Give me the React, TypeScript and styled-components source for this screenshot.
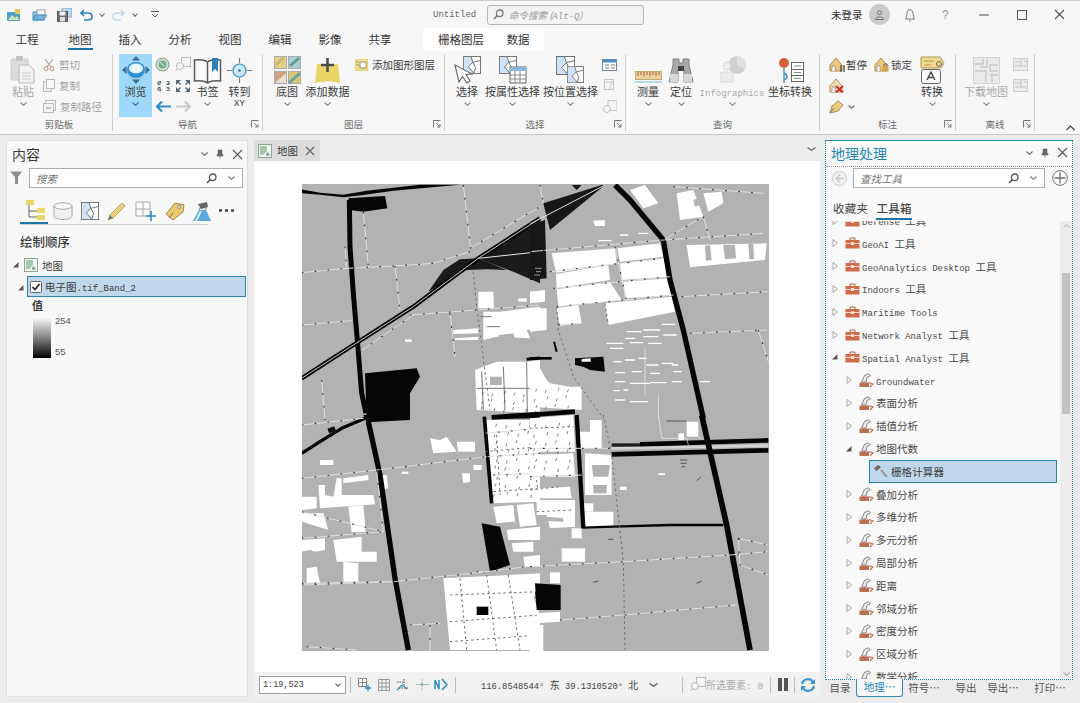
import React from "react";
import styled, { createGlobalStyle } from "styled-components";

const Global = createGlobalStyle`
  html, body { margin: 0; padding: 0; width: 1080px; height: 703px; overflow: hidden; background: #eeeeee; }
  body { font-family: "Noto Sans CJK SC", "Liberation Sans", sans-serif; color: #3c3c3c; }
  * { box-sizing: border-box; }
`;

const Lat = styled.span<{ $s?: number }>`
  font-family: "Liberation Mono", monospace;
  font-size: ${(p) => p.$s ?? 9}px;
`;
const Glyph = styled.svg`
  display: block;
  flex: none;
`;
type SvgP = { w: number; h: number; children?: React.ReactNode };
const S = ({ w, h, children }: SvgP) => (
  <Glyph width={w} height={h} viewBox={`0 0 ${w} ${h}`}>
    {children}
  </Glyph>
);

/* ---------- layout ---------- */
const Page = styled.div`
  width: 1080px;
  height: 703px;
  display: flex;
  flex-direction: column;
  overflow: hidden;
  background: #ececec;
`;
const TitleBar = styled.div`
  height: 28px;
  display: flex;
  align-items: center;
  background: #f7f7f7;
  border-top: 1px solid #cfcfcf;
`;
const Qat = styled.div`
  width: 433px;
  height: 100%;
  display: flex;
  align-items: center;
  padding-left: 7px;
`;
const QatSlot = styled.div<{ $w: number }>`
  width: ${(p) => p.$w}px;
  flex: none;
  display: flex;
  align-items: center;
`;
const DocTitle = styled.div`
  width: 54px;
  color: #666;
  font-size: 9px;
  line-height: 12px;
  display: flex;
  align-items: center;
`;
const TopSearch = styled.div`
  width: 157px;
  height: 20px;
  background: #f3f3f3;
  border: 1px solid #b4b4b4;
  border-radius: 3px;
  display: flex;
  align-items: center;
  gap: 5px;
  padding-left: 5px;
  font-size: 9.5px;
  font-style: italic;
  color: #9a9a9a;
`;
const Account = styled.div`
  margin-left: 187px;
  width: 34px;
  font-size: 10.5px;
  color: #333;
`;
const Avatar = styled.div`
  width: 21px;
  height: 21px;
  margin-left: 4px;
  border-radius: 50%;
  background: #c9c9c9;
  display: flex;
  align-items: center;
  justify-content: center;
`;
const WinSlot = styled.div<{ $ml: number }>`
  margin-left: ${(p) => p.$ml}px;
  flex: none;
  display: flex;
`;
const TabBar = styled.div`
  height: 24px;
  display: flex;
  padding-left: 2px;
  background: #f7f7f7;
`;
const TabItem = styled.div<{ $on?: boolean; $w?: number; $ml?: number }>`
  width: ${(p) => p.$w ?? 50}px;
  margin-left: ${(p) => p.$ml ?? 0}px;
  height: 24px;
  display: flex;
  justify-content: center;
  padding-top: 2px;
  font-size: 11.5px;
  line-height: 18px;
  color: #333;
  span {
    display: block;
    height: 20px;
    padding: 0 1px;
    border-bottom: ${(p) => (p.$on ? "2px solid #1d74a6" : "2px solid transparent")};
  }
`;
const Context = styled.div`
  margin-left: 18px;
  width: 121px;
  height: 23px;
  background: #ffffff;
  border-radius: 2px;
  display: flex;
  padding-left: 6px;
`;
const Ribbon = styled.div`
  height: 83px;
  display: flex;
  padding: 2px 0 0 6px;
  background: #f7f7f7;
  border-bottom: 1px solid #c7c7c7;
`;
const Group = styled.div<{ $w: number }>`
  width: ${(p) => p.$w}px;
  flex: none;
  display: flex;
  flex-direction: column;
  border-right: 1px solid #cfcfcf;
  margin-bottom: 3px;
`;
const GroupBody = styled.div`
  height: 63px;
  display: flex;
`;
const GroupFoot = styled.div`
  flex: 1;
  display: grid;
  grid-template-columns: 1fr auto 1fr;
  align-items: center;
  font-size: 9.5px;
  color: #6a6a6a;
  span:last-child {
    justify-self: end;
    margin-right: 3px;
    display: block;
  }
`;
const Large = styled.div<{ $w: number; $ml?: number; $on?: boolean; $off?: boolean }>`
  width: ${(p) => p.$w}px;
  margin-left: ${(p) => p.$ml ?? 0}px;
  flex: none;
  display: flex;
  flex-direction: column;
  align-items: center;
  background: ${(p) => (p.$on ? "#9fd8f8" : "transparent")};
  color: ${(p) => (p.$off ? "#a8a8a8" : "#3c3c3c")};
  font-size: 11px;
  line-height: 14px;
`;
const LargeIcon = styled.div`
  height: 30px;
  width: 100%;
  display: flex;
  align-items: flex-end;
  justify-content: center;
`;
const LargeText = styled.div`
  height: 14px;
  white-space: nowrap;
`;
const LargeSub = styled.div`
  height: 12px;
  display: flex;
  justify-content: center;
  align-items: center;
  line-height: 10px;
`;
const SmallCol = styled.div<{ $ml: number; $w?: number }>`
  margin-left: ${(p) => p.$ml}px;
  ${(p) => (p.$w ? `width:${p.$w}px;flex:none;` : "")}
  display: flex;
  flex-direction: column;
`;
const Small = styled.div<{ $off?: boolean; $gap?: number }>`
  height: 21px;
  display: flex;
  align-items: center;
  gap: ${(p) => p.$gap ?? 4}px;
  white-space: nowrap;
  font-size: 10.5px;
  color: ${(p) => (p.$off ? "#a0a0a0" : "#3c3c3c")};
`;
const SmallRow = styled.div<{ $gap?: number; $start?: boolean }>`
  height: 21px;
  display: flex;
  align-items: center;
  justify-content: ${(p) => (p.$start ? "flex-start" : "center")};
  gap: ${(p) => p.$gap ?? 3}px;
`;
const Collapse = styled.div`
  flex: 1;
  display: flex;
  align-items: flex-end;
  justify-content: flex-end;
  padding: 0 5px 3px 0;
`;
const Main = styled.div`
  flex: 1;
  min-height: 0;
  display: flex;
  gap: 5px;
  padding: 5px 7px 6px 6px;
`;
const LeftPanel = styled.div`
  width: 242px;
  flex: none;
  background: #f8f8f8;
  border: 1px solid #dedede;
  display: flex;
  flex-direction: column;
`;
const PanelHead = styled.div<{ $blue?: boolean }>`
  height: 26px;
  flex: none;
  display: flex;
  align-items: center;
  padding: 0 4px 0 5px;
  font-size: 14px;
  color: ${(p) => (p.$blue ? "#1f86b5" : "#3a3a3a")};
  ${(p) => (p.$blue ? "border-bottom:1px dotted #9a9a9a;padding-bottom:2px;" : "")}
`;
const HeadTitle = styled.div`
  flex: 1;
`;
const HeadBtns = styled.div`
  display: flex;
  align-items: center;
  gap: 8px;
`;
const SearchRow = styled.div`
  height: 22px;
  flex: none;
  display: flex;
  align-items: center;
`;
const SearchBox = styled.div<{ $w: number; $ml: number }>`
  width: ${(p) => p.$w}px;
  margin-left: ${(p) => p.$ml}px;
  height: 20px;
  background: #fff;
  border: 1px solid #adadad;
  display: flex;
  align-items: center;
  justify-content: space-between;
  padding: 0 7px 0 6px;
  font-style: italic;
  font-size: 10.5px;
  color: #777;
`;
const SearchEnd = styled.div`
  display: flex;
  align-items: center;
  gap: 11px;
`;
const CatRow = styled.div`
  height: 27px;
  margin-top: 8px;
  padding: 0 0 0 18px;
  display: flex;
  align-items: center;
  gap: 8px;
`;
const CatLine = styled.div`
  margin: 0 0 0 13px;
  width: 188px;
  height: 1px;
  background: #d6d6d6;
  position: relative;
  &::before {
    content: "";
    position: absolute;
    left: 0;
    top: -2px;
    width: 28px;
    height: 2px;
    background: #1d74a6;
  }
`;
const Heading = styled.div`
  margin: 8px 0 0 13px;
  height: 18px;
  line-height: 18px;
  font-size: 12.5px;
  font-weight: 500;
  color: #3c3c3c;
`;
const MapRow = styled.div`
  margin-top: 3px;
  height: 22px;
  display: flex;
  align-items: center;
  padding-left: 5px;
  gap: 4px;
  font-size: 10.5px;
`;
const LayerRow = styled.div`
  margin-left: 20px;
  width: 219px;
  height: 21px;
  background: #c0d8ec;
  border: 1px solid #2c82ad;
  display: flex;
  align-items: center;
  padding-left: 2px;
  gap: 3px;
  font-size: 10.5px;
  position: relative;
`;
const LayerArrow = styled.div`
  position: absolute;
  left: -11px;
  top: 6px;
`;
const LegendTitle = styled.div`
  margin: 0 0 0 25px;
  font-size: 11px;
  font-weight: 700;
  line-height: 16px;
`;
const Legend = styled.div`
  margin: 5px 0 0 26px;
  display: flex;
  gap: 4px;
`;
const Ramp = styled.div`
  width: 18px;
  height: 40px;
  background: linear-gradient(#f6f6f6, #8c8c8c 45%, #000);
`;
const RampLabels = styled.div`
  height: 43px;
  margin-top: -3px;
  display: flex;
  flex-direction: column;
  justify-content: space-between;
  font-family: "Liberation Sans", sans-serif;
  font-size: 9.5px;
  color: #555;
  line-height: 12px;
`;
const Center = styled.div`
  width: 567px;
  flex: none;
  display: flex;
  flex-direction: column;
`;
const DocTabs = styled.div`
  height: 21px;
  display: flex;
  align-items: flex-start;
  justify-content: space-between;
  padding-right: 4px;
`;
const DocTab = styled.div`
  margin-left: 1px;
  width: 66px;
  height: 21px;
  background: #dcdcdc;
  display: flex;
  align-items: center;
  padding: 0 4px;
  font-size: 10.5px;
  gap: 5px;
`;
const DocTabLabel = styled.span`
  white-space: nowrap;
  margin-right: 2px;
`;
const DocChevron = styled.div`
  padding-top: 7px;
`;
const MapView = styled.div`
  flex: 1;
  background: #fff;
  margin-left: 1px;
  padding: 23px 0 0 48px;
  min-height: 0;
`;
const StatusBar = styled.div`
  height: 25px;
  margin-left: 1px;
  background: #f1f1f1;
  display: flex;
  align-items: center;
  padding-left: 5px;
  font-size: 10px;
  color: #555;
`;
const ScaleBox = styled.div`
  width: 87px;
  height: 18px;
  background: #fff;
  border: 1px solid #9e9e9e;
  display: flex;
  align-items: center;
  justify-content: space-between;
  padding: 0 4px 0 3px;
  color: #444;
`;
const Sep = styled.div<{ $ml: number }>`
  margin-left: ${(p) => p.$ml}px;
  width: 1px;
  height: 16px;
  background: #bdbdbd;
  flex: none;
`;
const StatItem = styled.div<{ $ml: number }>`
  margin-left: ${(p) => p.$ml}px;
  flex: none;
  display: flex;
  align-items: center;
`;
const CoordText = styled.div`
  margin-left: 25px;
  width: 168px;
  flex: none;
  white-space: pre;
  color: #444;
`;
const SelCount = styled.div`
  flex: none;
  white-space: pre;
  color: #aaa;
`;
const Right = styled.div`
  flex: 1;
  display: flex;
  flex-direction: column;
`;
const Geo = styled.div`
  height: 540px;
  background: #f9f9f9;
  border: 1px dotted #1f7fa8;
  border-top: 1px solid #2f8cb0;
  display: flex;
  flex-direction: column;
  overflow: hidden;
`;
const GeoTabs = styled.div`
  height: 32px;
  flex: none;
  display: flex;
  align-items: flex-start;
  padding: 11px 0 0 7px;
  gap: 8px;
  font-size: 11.5px;
`;
const GeoTab = styled.div<{ $on?: boolean }>`
  height: 20px;
  line-height: 16px;
  color: #444;
  letter-spacing: 0.3px;
  border-bottom: ${(p) => (p.$on ? "2px solid #1d74a6" : "none")};
  font-weight: ${(p) => (p.$on ? 500 : 400)};
`;
const TreeArea = styled.div`
  flex: 1;
  min-height: 0;
  display: flex;
`;
const Tree = styled.div`
  flex: 1;
  overflow: hidden;
  min-width: 0;
`;
const TreeList = styled.div`
  margin-top: -11.8px;
  display: flex;
  flex-direction: column;
`;
const Row = styled.div<{ $level: number }>`
  height: 22.8px;
  flex: none;
  display: flex;
  align-items: center;
  padding-left: ${(p) => 5 + p.$level * 14}px;
  font-size: 10.5px;
  color: #4a4a4a;
  white-space: nowrap;
`;
const RowArrow = styled.div`
  width: 8px;
  margin-right: 6px;
  flex: none;
`;
const RowLabel = styled.div`
  margin-left: 2px;
`;
const SelectedRow = styled.div`
  height: 22.8px;
  flex: none;
  margin: 0 3px 0 43px;
  background: #c0d8ec;
  border: 1px solid #2c82ad;
  display: flex;
  align-items: center;
  padding-left: 3px;
  gap: 2px;
  font-size: 10.5px;
  letter-spacing: 0.1px;
`;
const Scroll = styled.div`
  width: 12px;
  flex: none;
  background: #ececec;
  display: flex;
  flex-direction: column;
  align-items: center;
  padding-top: 3px;
`;
const Thumb = styled.div`
  width: 8px;
  height: 141px;
  margin-top: 45px;
  background: #c2c2c2;
`;
const ScrollEnd = styled.div`
  margin-top: auto;
  padding-bottom: 3px;
`;
const BottomTabs = styled.div`
  flex: 1;
  display: flex;
  align-items: flex-start;
  font-size: 10.5px;
  color: #555;
`;
const BottomTab = styled.div<{ $w: number; $ml: number; $on?: boolean }>`
  width: ${(p) => p.$w}px;
  margin-left: ${(p) => p.$ml}px;
  height: 17px;
  line-height: 15px;
  text-align: center;
  white-space: nowrap;
  ${(p) =>
    p.$on
      ? "color:#1f86b5;background:#f9f9f9;border:1px solid #2f8cb0;border-top:none;border-radius:0 0 3px 3px;margin-top:-1px;height:18px;"
      : ""}
`;
const Spacer = styled.div<{ $w: number }>`
  width: ${(p) => p.$w}px;
  flex: none;
`;

/* ---------- small icons ---------- */
const ChevD = ({ c = "#777", w = 7 }: { c?: string; w?: number }) => (
  <S w={w} h={4}>
    <path d={`M.5 .5L${w / 2} 3.3L${w - 0.5} .5`} fill="none" stroke={c} strokeWidth="1.1" />
  </S>
);
const Pin = () => (
  <S w={8} h={10}>
    <path d="M2 1h4v4.5h1V7H1V5.5h1zM4 7v3" fill="#666" stroke="#666" strokeWidth=".6" />
  </S>
);
const Close = ({ s = 11, c = "#555" }: { s?: number; c?: string }) => (
  <S w={s} h={s}>
    <path d={`M1 1L${s - 1} ${s - 1}M${s - 1} 1L1 ${s - 1}`} stroke={c} strokeWidth="1.1" />
  </S>
);
const Mag = ({ c = "#555" }: { c?: string }) => (
  <S w={11} h={11}>
    <circle cx="6.7" cy="4.3" r="3.3" fill="none" stroke={c} strokeWidth="1.3" />
    <path d="M4.2 6.8L1 10" stroke={c} strokeWidth="1.6" />
  </S>
);
const TriR = () => (
  <S w={8} h={10}>
    <path d="M2 1.5L6.5 5L2 8.5z" fill="#fafafa" stroke="#a8a8a8" />
  </S>
);
const TriD = () => (
  <S w={8} h={10}>
    <path d="M1 7.5H6.5V2z" fill="#555" />
  </S>
);
const Launcher = () => (
  <S w={8} h={8}>
    <path d="M.5 7.5V.5H7.5M3 3L7 7M7 4V7H4" fill="none" stroke="#777" />
  </S>
);
const Toolbox = () => (
  <S w={15} h={12}>
    <path d="M5 3V1h5v2" fill="none" stroke="#b5613c" />
    <rect x=".5" y="3" width="14" height="8.5" fill="#d2694a" />
    <rect x="0" y="6" width="15" height="1" fill="#f2d8c8" />
    <rect x="6" y="5" width="3" height="3" fill="#f3e0c8" />
  </S>
);
const ToolSet = () => (
  <S w={15} h={14}>
    <path d="M2.5 9L5.5 2.5L9.5 .8L11.5 2.8L8 4.5L7 9z" fill="#ececec" stroke="#777" strokeWidth=".9" />
    <path d="M.5 9.5H10V14H.5z" fill="#bd6d50" />
    <path d="M10 9.5L14 11L11 14" fill="none" stroke="#b96a4e" strokeWidth="1.1" />
  </S>
);
const Hammer = () => (
  <S w={16} h={14}>
    <path d="M8 6L14 13" stroke="#a59a8c" strokeWidth="2" />
    <path d="M1 4L5 1L8 3L5.5 5.5L3 7z" fill="#6e6e6e" />
  </S>
);

const Row1 = ({ level, open, set, children }: { level: number; open?: boolean; set?: boolean; children: React.ReactNode }) => (
  <Row $level={level}>
    <RowArrow>{open ? <TriD /> : <TriR />}</RowArrow>
    {set ? <ToolSet /> : <Toolbox />}
    <RowLabel>{children}</RowLabel>
  </Row>
);

/* ---------- ribbon icons ---------- */
const Tile = ({ x = 0, y = 0, s = 20 }: { x?: number; y?: number; s?: number }) => (
  <g transform={`translate(${x} ${y}) scale(${s / 20})`}>
    <rect x=".5" y=".5" width="19" height="19" fill="#fff" stroke="#6a6a6a" />
    <path d="M1 1H9L11 7L6 12L12 19H1z" fill="#cde3f5" />
    <path d="M9 1L11 7L6 12L12 19M11 7L19 5M11 7L14 13L12 19" fill="none" stroke="#6a6a6a" />
  </g>
);
const NewProj = () => (
  <S w={14} h={12}>
    <rect x="0" y="3" width="13" height="9" rx="1" fill="#4f9fcd" />
    <path d="M1 11L5 6L8 9L10 7L12 11z" fill="#cfe6a8" />
    <rect x="8" y="0" width="5" height="5" fill="#e5c85e" />
  </S>
);
const OpenProj = () => (
  <S w={15} h={12}>
    <path d="M1 3H6L7 4.5H12V11H1z" fill="#9fc9e6" stroke="#4a90bd" />
    <rect x="5" y="1" width="8" height="5" fill="#fff" stroke="#999" />
    <path d="M1 11L3 6H14.5L12 11z" fill="#73b1d9" stroke="#4a90bd" />
  </S>
);
const SaveProj = () => (
  <S w={15} h={14}>
    <rect x="5" y="0" width="10" height="9" fill="#bcd8ec" stroke="#86a8c0" />
    <rect x=".5" y="3.5" width="10" height="10" fill="#6d6d7a" stroke="#555" />
    <rect x="2.5" y="3.5" width="6" height="4" fill="#eee" />
    <rect x="3" y="9" width="5" height="4.5" fill="#ddd" />
  </S>
);
const Undo = () => (
  <S w={13} h={12}>
    <path d="M4 1L1 4L4 7M1 4H8C11 4 12 6 12 7.5C12 9 11 11 8 11H4" fill="none" stroke="#2a86c0" strokeWidth="1.7" />
  </S>
);
const Redo = () => (
  <S w={13} h={12}>
    <path d="M9 1L12 4L9 7M12 4H5C2 4 1 6 1 7.5C1 9 2 11 5 11H9" fill="none" stroke="#c4dcea" strokeWidth="1.7" />
  </S>
);
const Customize = () => (
  <S w={8} h={7}>
    <path d="M0 .5H8M1 3L4 6L7 3" fill="none" stroke="#555" />
  </S>
);
const Paste = () => (
  <S w={26} h={28}>
    <rect x="1" y="3" width="17" height="21" rx="1" fill="#dcdcdc" stroke="#cfcfcf" />
    <rect x="6" y="0" width="7" height="5" fill="#c4c4c4" />
    <path d="M9 9H19L24 14V27H9z" fill="#f2f2f2" stroke="#bbb" />
    <path d="M12 17H21M12 20H21M12 23H21" stroke="#ccc" />
  </S>
);
const Scissors = () => (
  <S w={12} h={13}>
    <path d="M2 1L8 9M10 1L4 9" stroke="#aaa" strokeWidth="1.2" />
    <circle cx="3" cy="10.5" r="2" fill="none" stroke="#c48a7c" />
    <circle cx="9" cy="10.5" r="2" fill="none" stroke="#c48a7c" />
  </S>
);
const Copy = () => (
  <S w={12} h={13}>
    <rect x=".5" y="2.5" width="8" height="10" fill="#eee" stroke="#bbb" />
    <rect x="3.5" y=".5" width="8" height="9" fill="#f8f8f8" stroke="#bbb" />
  </S>
);
const CopyPath = () => (
  <S w={13} h={13}>
    <rect x="2.5" y=".5" width="10" height="10" fill="#f8f8f8" stroke="#bbb" />
    <rect x=".5" y="3.5" width="10" height="9" fill="#f2f2f2" stroke="#bbb" />
    <path d="M3 8H8" stroke="#999" />
  </S>
);
const Navigator = () => (
  <S w={28} h={28}>
    <path d="M14 0L10 4.5H18zM14 28L10 23.5H18zM0 14L4.5 10V18zM28 14L23.5 10V18z" fill="#3a6f9c" />
    <ellipse cx="14" cy="14" rx="9" ry="8" fill="#2f8fd0" />
    <ellipse cx="14" cy="12.5" rx="7" ry="5" fill="#e8f3fb" />
  </S>
);
const Globe = () => (
  <S w={15} h={15}>
    <circle cx="7.5" cy="7.5" r="6.5" fill="#cfe0d4" stroke="#8a9a90" />
    <circle cx="7.5" cy="7.5" r="4" fill="#79b08f" />
    <path d="M5 5L9 9" stroke="#eee" />
  </S>
);
const ZoomLayer = () => (
  <S w={16} h={15}>
    <rect x="6.5" y=".5" width="9" height="9" fill="#f6f6f6" stroke="#bbb" />
    <circle cx="5" cy="9" r="3.5" fill="#f8f8f8" stroke="#b5b5b5" />
    <path d="M2 12L.5 14" stroke="#b5b5b5" />
  </S>
);
const Arrows4 = ({ flip }: { flip?: boolean }) => (
  <S w={14} h={12}>
    {flip ? (
      <path d="M0 0h5L3 2l2 2-1 1-2-2-2 2zM14 0h-5l2 2-2 2 1 1 2-2 2 2zM0 12h5l-2-2 2-2-1-1-2 2-2-2zM14 12h-5l2-2-2-2 1-1 2 2 2-2z" fill="#5b6b78" />
    ) : (
      <path d="M0 1l4 4H1zM1 1h3v3zM13 1L9 5h3zM9 1h4v3zM0 11l4-4H1zM1 11h3V8zM13 11L9 7h3zM9 11h4V8z" fill="#5b6b78" />
    )}
  </S>
);
const ArrowL = () => (
  <S w={15} h={11}>
    <path d="M6 .5L1 5.5L6 10.5M1 5.5H15" fill="none" stroke="#2f8fd0" strokeWidth="2.2" />
  </S>
);
const ArrowR = () => (
  <S w={15} h={11}>
    <path d="M9 .5L14 5.5L9 10.5M14 5.5H0" fill="none" stroke="#c9c9c9" strokeWidth="2.2" />
  </S>
);
const Book = () => (
  <S w={29} h={26}>
    <path d="M14.5 4C11 1.5 6 1.5 1.5 2V23C6 22.5 11 22.5 14.5 25C18 22.5 23 22.5 27.5 23V2C23 1.5 18 1.5 14.5 4zM14.5 4V25" fill="#fafafa" stroke="#5a5a5a" strokeWidth="1.5" />
    <path d="M19 0H25V14L22 11L19 14z" fill="#2f80b8" />
  </S>
);
const GoTo = () => (
  <S w={27} h={27}>
    <circle cx="13.5" cy="13.5" r="6.5" fill="#cfe6f6" stroke="#2f8cc5" strokeWidth="1.2" />
    <circle cx="13.5" cy="13.5" r="1.3" fill="#2f6c9a" />
    <path d="M13.5 1V6M13.5 21V26M1 13.5H6M21 13.5H26" stroke="#777" strokeWidth="1.1" />
  </S>
);
const Basemap = () => (
  <S w={27} h={28}>
    <rect x=".5" y=".5" width="12" height="12" fill="#e3cf85" stroke="#aaa" />
    <path d="M2 9L9 2" stroke="#c9b874" strokeWidth="3" />
    <rect x="14.5" y=".5" width="12" height="12" fill="#a8cfd6" stroke="#aaa" />
    <path d="M16 10L25 2" stroke="#63a08f" strokeWidth="3" />
    <rect x=".5" y="15.5" width="12" height="12" fill="#cda27c" stroke="#aaa" />
    <path d="M1 27L12 17V27z" fill="#e4e0d2" />
    <rect x="14.5" y="15.5" width="12" height="12" fill="#d8c678" stroke="#aaa" />
    <path d="M15 27L26 17" stroke="#69a3a4" strokeWidth="3" />
  </S>
);
const AddData = () => (
  <S w={27} h={26}>
    <path d="M3 6H24L26 25L14 23L1 25z" fill="#ecd464" />
    <path d="M13.5 0V14M7 7H20" stroke="#4d4d4d" strokeWidth="2.6" />
  </S>
);
const AddGraphic = () => (
  <S w={13} h={12}>
    <rect x="0" y="0" width="13" height="12" fill="#f0e199" stroke="#d8c264" />
    <rect x="5" y="3" width="6" height="6" fill="#fff" stroke="#9a8f5a" />
    <path d="M1 3H4M1 6H4" stroke="#9a8f5a" />
  </S>
);
const Cursor = () => (
  <path d="M1 9L5 26L8.5 20.5L13 27L16 25L12 18.5L18 18z" fill="#fff" stroke="#666" strokeWidth="1.1" />
);
const SelectIc = () => (
  <S w={27} h={28}>
    <Tile x={9} y={0} s={18} />
    <Cursor />
  </S>
);
const SelAttr = () => (
  <S w={28} h={28}>
    <Tile x={0} y={0} s={18} />
    <rect x="11" y="11" width="16" height="16" fill="#fff" stroke="#666" />
    <rect x="11" y="11" width="16" height="4" fill="#8ab8de" />
    <path d="M11 19H27M11 23H27M16 15V27M21 15V27" stroke="#888" />
  </S>
);
const SelLoc = () => (
  <S w={29} h={28}>
    <Tile x={0} y={0} s={19} />
    <Tile x={11} y={10} s={17} />
  </S>
);
const TableIc = () => (
  <S w={15} h={12}>
    <rect x=".5" y=".5" width="14" height="11" fill="#fff" stroke="#6a8aa8" />
    <rect x=".5" y=".5" width="14" height="3" fill="#4f8fc0" />
    <path d="M3 6H7M3 9H7M9 6H13M9 9H13" stroke="#7a7a7a" />
  </S>
);
const SelFade = ({ z }: { z?: boolean }) => (
  <S w={15} h={14}>
    <rect x={z ? 6 : 2.5} y=".5" width="9" height="10" fill="#f6f6f6" stroke="#c6c6c6" />
    {z ? <circle cx="5" cy="9" r="3.5" fill="#f9f9f9" stroke="#c0c0c0" /> : <path d="M4 3H11L8 7V10" fill="none" stroke="#c6c6c6" />}
  </S>
);
const Ruler = () => (
  <S w={27} h={16}>
    <rect x=".5" y="3.5" width="26" height="8" fill="#e9d19d" stroke="#c3a872" />
    <path d="M3 4V8M6 4V7M9 4V8M12 4V7M15 4V8M18 4V7M21 4V8M24 4V7" stroke="#b4603c" />
    <path d="M0 14H27" stroke="#7ab6dc" />
  </S>
);
const Binoc = () => (
  <S w={26} h={26}>
    <path d="M5 1H11V5H15V1H21V7L25 24H16V12H10V24H1L5 7z" fill="#a9a9a9" stroke="#808080" />
    <rect x="2" y="16" width="8" height="8" fill="#d7d7d7" />
    <rect x="16" y="16" width="8" height="8" fill="#d7d7d7" />
    <rect x="10" y="8" width="6" height="5" fill="#444" />
  </S>
);
const Info = () => (
  <S w={28} h={28}>
    <circle cx="19" cy="9" r="9" fill="#d0d0d0" />
    <path d="M19 9V0A9 9 0 0 1 27 13z" fill="#e2e2e2" />
    <circle cx="9" cy="10" r="4" fill="#eee" stroke="#d6d6d6" />
    <path d="M3 26V16H15V26z" fill="#ececec" stroke="#d6d6d6" />
  </S>
);
const CoordIc = () => (
  <S w={29} h={28}>
    <circle cx="8" cy="7" r="5" fill="#d2603c" />
    <path d="M8 12V27" stroke="#5a9cc5" strokeWidth="1.5" />
    <path d="M11 22A5 5 0 0 0 8 17M11 22L8 24" fill="none" stroke="#3a8cc0" strokeWidth="1.5" />
    <rect x="15.5" y="6.5" width="12" height="7" fill="#fff" stroke="#666" />
    <rect x="15.5" y="13.5" width="12" height="6" fill="#fff" stroke="#666" />
    <rect x="15.5" y="19.5" width="12" height="6" fill="#fff" stroke="#666" />
    <path d="M18 10H25M18 16.5H25M18 22.5H25" stroke="#888" />
  </S>
);
const House = ({ c = "#e9c77e" }: { c?: string }) => (
  <g>
    <path d="M1 8L7 1L13 8V14H1z" fill={c} stroke="#b8894e" />
    <path d="M3 14V9H6V14" fill="#fff" stroke="#888" strokeWidth=".7" />
  </g>
);
const Pause = () => (
  <S w={16} h={15}>
    <House />
    <path d="M12 8V15M15 8V15" stroke="#555" strokeWidth="1.4" />
  </S>
);
const Lock = () => (
  <S w={16} h={15}>
    <House />
    <rect x="8.5" y="9" width="6" height="5.5" fill="#d4a34d" />
    <path d="M10 9V7H13V9" fill="none" stroke="#666" />
  </S>
);
const Cancel = () => (
  <S w={15} h={15}>
    <House c="#f0dcae" />
    <path d="M7 8L14 14.5M14 8L7 14.5" stroke="#d02c22" strokeWidth="1.8" />
  </S>
);
const PenIc = () => (
  <S w={15} h={14}>
    <path d="M1 13L3 6L9 1L14 5L9 11z" fill="#eccf7e" stroke="#a89050" />
    <path d="M1 13L5 8" stroke="#777" />
  </S>
);
const Convert = () => (
  <S w={25} h={28}>
    <path d="M1 1H20L24 7L21 12H1z" fill="#f0d98e" stroke="#b39a52" />
    <path d="M4 5H14M4 9H11" stroke="#b39a52" />
    <circle cx="19" cy="8" r="2.5" fill="none" stroke="#666" />
    <rect x="1.5" y="13.5" width="19" height="14" rx="2" fill="#fafafa" stroke="#666" />
    <path d="M7 24L11 16L15 24M8.5 21.5H13.5" fill="none" stroke="#444" strokeWidth="1.4" />
  </S>
);
const Download = () => (
  <S w={27} h={27}>
    <rect x=".5" y=".5" width="26" height="26" fill="#eaeaea" stroke="#d4d4d4" />
    <path d="M2 7H10V2M14 2V10H7M2 14H13V25M25 8H17V14H25M17 18H25M19 25V18" fill="none" stroke="#c8c8c8" strokeWidth="1.4" />
  </S>
);
const TileFade = () => (
  <S w={15} h={13}>
    <rect x=".5" y=".5" width="14" height="12" fill="#ececec" stroke="#cfcfcf" />
    <path d="M2 4H8M8 1V8M2 8H13M11 3H14" stroke="#c4c4c4" />
  </S>
);
/* contents tab icons */
const DrawOrder = () => (
  <S w={20} h={21}>
    <rect x="1" y="0" width="8" height="5" fill="#ecd56a" />
    <path d="M4 5V17H12M4 11H12" fill="none" stroke="#666" />
    <rect x="12" y="8" width="8" height="5" fill="#ecd56a" />
    <rect x="12" y="15" width="8" height="5" fill="#ecd56a" />
  </S>
);
const Cylinder = () => (
  <S w={20} h={18}>
    <path d="M1 4V14C1 16 5 17.5 10 17.5S19 16 19 14V4" fill="#f0f0f0" stroke="#aaa" />
    <ellipse cx="10" cy="4" rx="9" ry="3.3" fill="#f8f8f8" stroke="#aaa" />
  </S>
);
const Pencil = () => (
  <S w={20} h={20}>
    <path d="M1 19L3 14L15 2L18 5L6 17z" fill="#eccf7e" stroke="#c4a860" />
    <path d="M1 19L3 14L6 17z" fill="#777" />
  </S>
);
const GridPlus = () => (
  <S w={22} h={20}>
    <path d="M1 1H15V15H1zM8 1V15M1 8H15" fill="#fafafa" stroke="#aaa" />
    <path d="M16 10V20M11 15H21" stroke="#2f8cc5" strokeWidth="1.6" />
  </S>
);
const Label2 = () => (
  <S w={20} h={20}>
    <path d="M1 13L10 2L19 4L18 11L8 19z" fill="#ecc96e" stroke="#a88a44" />
    <circle cx="14" cy="6" r="1.5" fill="#fff" stroke="#888" />
    <path d="M4 17L8 12" stroke="#666" />
  </S>
);
const Flask = () => (
  <S w={18} h={20}>
    <path d="M0 20L6 9H13L18 20z" fill="#5aa8d8" />
    <path d="M6 9L9 3H13L13 9" fill="#e8e8e8" stroke="#888" />
    <path d="M5 3L14 1L15 6L8 8z" fill="#666" />
    <path d="M3 20L8 10" stroke="#d4ecf8" strokeWidth="2" />
  </S>
);
const MapIc = () => (
  <S w={14} h={14}>
    <rect x=".5" y=".5" width="13" height="13" fill="#f1f1f1" stroke="#8aa892" />
    <path d="M2 2H9V7L5 11H2z" fill="#a3c9ae" />
    <path d="M9 8L12 11L8 12z" fill="#6a9a7c" />
  </S>
);
const Check = () => (
  <S w={12} h={12}>
    <rect x=".5" y=".5" width="11" height="11" rx="1" fill="#fff" stroke="#666" />
    <path d="M2.5 6L5 8.5L9.5 3" fill="none" stroke="#222" strokeWidth="1.7" />
  </S>
);
const Funnel = () => (
  <S w={12} h={14}>
    <path d="M0 .5H12L8 6V13H5V6z" fill="#8d8d8d" />
  </S>
);
const BackC = () => (
  <S w={15} h={15}>
    <circle cx="7.5" cy="7.5" r="7" fill="#f2f2f2" stroke="#c9c9c9" />
    <path d="M8 3.5L4 7.5L8 11.5M4 7.5H12" fill="none" stroke="#c9c9c9" strokeWidth="1.4" />
  </S>
);
const PlusC = () => (
  <S w={16} h={16}>
    <circle cx="8" cy="8" r="7.3" fill="#fff" stroke="#6c6c6c" />
    <path d="M8 2.5V13.5M2.5 8H13.5" stroke="#6c6c6c" strokeWidth="1.3" />
  </S>
);
/* status icons */
const StGrid = () => (
  <S w={14} h={13}>
    <path d="M.5.5H8.5V8.5H.5zM4.5.5V8.5M.5 4.5H8.5" fill="#fff" stroke="#888" />
    <path d="M10 7V13M7 10H13" stroke="#2f8cc5" strokeWidth="1.4" />
  </S>
);
const StGrid2 = () => (
  <S w={12} h={12}>
    <path d="M.5.5H11.5V11.5H.5zM4 .5V11.5M8 .5V11.5M.5 4H11.5M.5 8H11.5" fill="#f4f4f4" stroke="#999" />
  </S>
);
const StNet = () => (
  <S w={14} h={13}>
    <path d="M1 4L8 4M8 1V8M3 10H13" stroke="#555" strokeDasharray="1.5 1" />
    <path d="M1 12L6 7L11 11" fill="none" stroke="#2f8cc5" strokeWidth="1.3" />
  </S>
);
const StSnap = () => (
  <S w={13} h={11}>
    <path d="M6 0V11" stroke="#bbb" strokeDasharray="2 1" />
    <path d="M0 5.5H13" stroke="#9cc4a8" />
    <circle cx="6" cy="5.5" r="1.5" fill="#aaa" />
  </S>
);
const StNorth = () => (
  <S w={14} h={13}>
    <path d="M1 11V2L5 11V2" fill="none" stroke="#2f8cc5" strokeWidth="1.5" />
    <path d="M8 1L13 6.5L8 12" fill="none" stroke="#2f8cc5" strokeWidth="1.5" />
  </S>
);
const StPause = () => (
  <S w={10} h={13}>
    <path d="M0 0H4V13H0zM6 0H10V13H6z" fill="#555" />
  </S>
);
const StRefresh = () => (
  <S w={14} h={14}>
    <path d="M1 6A6 6 0 0 1 12 4M13 8A6 6 0 0 1 2 10" fill="none" stroke="#3d93cf" strokeWidth="2.2" />
    <path d="M14 1V6H9zM0 13V8H5z" fill="#3d93cf" />
  </S>
);
const WinMin = () => (
  <S w={10} h={10}>
    <path d="M0 5H10" stroke="#555" />
  </S>
);
const WinMax = () => (
  <S w={10} h={10}>
    <rect x=".5" y=".5" width="9" height="9" fill="none" stroke="#555" />
  </S>
);
const Bell = () => (
  <S w={12} h={14}>
    <path d="M1.5 11C3 9.5 2.5 4 4 2.5C5 1.5 7 1.5 8 2.5C9.5 4 9 9.5 10.5 11zM5 13H7" fill="none" stroke="#777" />
  </S>
);
const User = () => (
  <S w={9} h={10}>
    <circle cx="4.5" cy="2.7" r="2" fill="none" stroke="#777" />
    <path d="M.5 9.5C1 6 8 6 8.5 9.5z" fill="none" stroke="#777" />
  </S>
);
const Question = styled.div`
  font-family: "Liberation Sans", sans-serif;
  font-size: 12px;
  color: #999;
  line-height: 14px;
`;

/* ---------- map ---------- */
const MapCanvas = styled.svg`
  display: block;
  background: #b2b2b2;
`;
const Z = ({ x, y, children }: { x: number; y: number; children: React.ReactNode }) => (
  <g transform={`translate(${x} ${y}) scale(${1 / 3})`}>{children}</g>
);
const Polys = ({ p, f }: { p: string[]; f: string }) => (
  <>
    {p.map((d, i) => (
      <polygon key={i} points={d} fill={f} />
    ))}
  </>
);
const Dashes = ({ p }: { p: string[] }) => (
  <g fill="none">
    {p.map((d, i) => (
      <g key={i}>
        <polyline points={d} stroke="#dedede" strokeWidth="3" />
        <polyline points={d} stroke="#333" strokeWidth="3.5" strokeDasharray="5 34" />
      </g>
    ))}
  </g>
);
const GrayDash = ({ p }: { p: string[] }) => (
  <g fill="none">
    {p.map((d, i) => (
      <polyline key={i} points={d} stroke="#6c6c6c" strokeWidth="3" strokeDasharray="7 9" />
    ))}
  </g>
);
const Road = ({ d, w, c = "#050505" }: { d: string; w: number; c?: string }) => (
  <polyline points={d} fill="none" stroke={c} strokeWidth={w} strokeLinejoin="round" />
);
const Bits = ({ d, c = "#fff", w = 4 }: { d: string; c?: string; w?: number }) => <path d={d} stroke={c} strokeWidth={w} fill="none" />;
const ticks = (x0: number, y0: number, x1: number, y1: number, dx: number, dy: number) => {
  let d = "";
  let i = 0;
  for (let y = y0; y < y1; y += dy) {
    for (let x = x0; x < x1; x += dx) {
      i += 1;
      d += `M${x + ((i * 7) % 11)},${y + ((i * 5) % 13)}l3,-9`;
    }
  }
  return d;
};

const Raster = () => (
  <MapCanvas width={467} height={467} viewBox="302 184 467 467">
    <Z x={300} y={180}>
      <Polys f="#fff" p={["535,335 580,335 582,385 535,385", "550,395 600,395 680,385 720,380 720,445 680,450 690,475 590,470 550,480", "460,450 535,445 535,460 460,462", "465,475 535,470 535,480 465,480", "315,478 335,478 335,486 315,486", "525,570 590,545 680,545 720,540 720,700 530,690", "690,335 720,335 720,365 690,365", "655,355 680,355 680,365 655,365"]} />
      <Polys f="#b2b2b2" p={["570,590 605,590 605,615 570,615", "595,465 640,460 650,500 600,510", "660,475 690,478 690,520 660,515"]} />
      <Bits c="#777" w={3} d="M540,410H575M560,440H600M530,625H720M545,575L550,690M610,560L615,690M680,545L682,700" />
      <Bits c="#444" w={2} d={ticks(540, 640, 715, 690, 32, 24)} />
      <Road d="148,60 150,200 160,340 172,480 185,640 198,700" w={15} />
      <Polys f="#060606" p={["5,28 60,38 130,44 200,32 360,14 480,14 280,32 190,45 130,52 60,44 5,40", "145,55 255,48 262,85 190,95 150,90", "195,580 350,565 360,590 330,640 330,720 200,720"]} />
      <Polys f="#1a1a1a" p={["535,235 720,115 720,310 640,275 560,245", "385,335 430,270 480,238 535,235 620,270 560,268 500,270 440,305"]} />
      <Road d="5,595 160,495 340,380 420,320 535,235 720,115" w={13} />
      <Road d="5,595 160,495 340,380 420,320 535,235 720,115" w={3} c="#cfcfcf" />
      <Road d="535,235 720,215" w={3} c="#e8e8e8" />
      <Road d="680,538 720,534" w={9} />
      <Road d="575,712 720,702" w={14} />
      <Bits d="M700,262h20M705,272h15M708,282h12" w={2} c="#ddd" />
      <Dashes p={["5,278 140,265 280,258 400,250 510,215", "490,15 512,210", "190,95 205,260", "285,258 300,390", "5,435 155,422", "330,405 530,390 720,375", "180,515 340,405", "450,400 465,530", "65,600 75,720", "135,200 140,265", "510,205 720,80"]} />
      <GrayDash p={["520,275 530,380 570,690"]} />
    </Z>
    <Z x={530} y={180}>
      <Polys f="#fff" p={["65,220 255,205 260,250 78,278", "262,205 390,190 400,230 270,245", "78,282 235,255 240,300 80,325", "270,250 405,235 415,290 275,300", "80,328 240,305 275,360 85,380", "280,305 420,295 425,345 285,355", "225,370 425,350 435,395 235,435", "80,385 145,375 155,430 90,437", "300,30 345,15 385,70 340,85", "440,40 490,30 520,110 450,120", "520,40 575,35 580,70 535,95", "470,195 710,190 705,240 480,262", "190,122 225,120 225,138 195,138", "0,335 45,330 45,365 0,370", "0,385 50,385 50,450 0,455", "0,550 20,548 50,600 60,610 120,620 155,620 155,690 0,680"]} />
      <Polys f="#b2b2b2" p={["525,198 540,195 545,240 528,242", "580,195 615,195 618,235 585,238", "655,192 670,192 672,238 658,238", "490,60 505,55 510,75 495,80"]} />
      <Polys f="#171717" p={["0,135 45,120 50,295 0,300", "40,70 215,15 225,15 60,150", "125,15 155,15 140,30"]} />
      <Polys f="#060606" p={["135,535 220,530 225,575 180,570 160,560 135,555"]} />
      <polygon points="155,537 182,535 182,545 155,545" fill="#fff" />
      <Road d="0,132 225,15" w={3} c="#e0e0e0" />
      <Road d="255,15 300,60 400,180 420,300 460,450 520,715" w={16} />
      <Road d="72,485 80,515" w={6} />
      <Road d="0,535 65,535" w={8} />
      <Road d="0,705 135,695" w={14} />
      <Bits c="#ddd" w={2} d="M15,265h20M18,275h15M12,285h18" />
      <Dashes p={["0,215 400,180 700,160", "255,200 290,365", "455,350 715,335", "480,460 710,450", "685,450 715,545", "400,180 520,110", "520,110 540,180", "430,20 700,40", "30,15 40,70", "60,275 400,235", "70,325 420,290", "80,380 430,345", "85,435 155,430"]} />
      <GrayDash p={["80,380 85,450 130,590 220,715", "225,370 235,435"]} />
      <Bits d="M205,182h40M270,165h25M325,160h30M290,455h45M340,450h50M395,433h40M285,475h30M340,470h45M400,465h40M230,490h50M300,488h40M355,490h40M240,505h40M250,545h25M285,540h30M325,535h25M350,555h35M395,550h35M425,555h20M255,578h30M305,575h30M360,580h30M430,575h25M255,605h30M300,610h60M360,608h50M425,605h30M250,632h20M280,630h15M255,660h30M300,665h30M330,665h25M510,605h30" />
      <Bits c="#eee" w={2} d="M345,505V645M385,640V715" />
      <Bits c="#555" w={2} d={ticks(10, 630, 130, 680, 32, 24)} />
    </Z>
    <Z x={300} y={415}>
      <Polys f="#fff" p={["555,15 720,15 720,260 575,265", "5,245 50,245 50,280 5,285", "55,210 75,210 75,240 100,245 110,190 125,190 125,240 220,240 225,268 60,280", "145,275 190,270 197,350 155,352", "5,295 70,295 85,345 5,320", "5,375 75,370 75,405 45,410 30,405 5,410", "100,375 185,365 185,410 230,410 230,440 135,440 110,440", "130,440 175,445 175,500 130,500", "20,460 50,455 60,505 20,505", "390,70 420,75 440,65 470,110 400,115", "470,80 525,80 525,110 475,110", "60,135 100,135 100,150 60,150", "130,190 205,180 205,195 130,205", "240,180 260,180 265,220 250,222", "305,170 325,170 325,177 305,177", "485,175 510,175 510,200 490,205", "520,150 545,150 545,165 520,165", "580,275 640,270 645,320 590,325", "650,270 700,265 710,330 660,335", "620,345 720,335 720,375 625,375", "635,385 700,380 700,410 640,410", "670,425 720,420 720,455 675,455", "430,490 720,475 720,535 700,545 720,600 720,705 450,705"]} />
      <Polys f="#b2b2b2" p={["470,10 530,10 525,50 470,45"]} />
      <Polys f="#060606" p={["545,325 600,335 630,450 570,470", "190,0 330,0 330,15 200,22", "530,575 565,575 565,600 530,600", "580,0 720,0 720,10 580,12", "705,530 720,525 720,585 712,585"]} />
      <Road d="5,115 60,80 125,40 195,10" w={10} />
      <Road d="85,48 105,40" w={14} />
      <Road d="205,20 240,180 285,490 325,705" w={16} />
      <Road d="553,5 575,265" w={11} />
      <Bits c="#444" w={2} d={ticks(580, 30, 715, 255, 34, 26)} />
      <Dashes p={["5,30 190,10", "5,190 230,165 560,125", "5,290 250,350", "5,370 250,350", "5,505 280,500 560,470 720,450", "5,510 280,500", "330,630 420,625", "390,630 390,710", "230,165 250,350", "560,125 720,115", "555,55 720,40", "580,180 720,175", "20,695 170,705", "530,470 560,470"]} />
      <GrayDash p={["480,490 500,705", "560,480 590,705", "625,480 660,705", "450,540 720,530", "450,620 720,600", "450,680 720,660", "590,60 600,240", "690,20 715,240", "555,110 720,95", "580,230 720,220"]} />
    </Z>
    <Z x={530} y={415}>
      <Polys f="#fff" p={["0,10 130,0 135,110 0,110", "0,120 130,115 135,185 0,185", "20,220 120,215 125,250 20,250", "20,255 135,255 135,335 60,340 50,300 20,300", "150,50 180,50 180,15 215,15 215,100 150,100", "165,115 245,120 245,240 165,240", "160,290 250,290 250,335 160,340", "160,265 190,265 190,290 160,290", "125,340 155,340 155,370 125,370", "95,400 165,400 165,440 95,440", "60,472 90,472 90,505 60,505", "0,425 30,425 30,455 0,455", "20,595 90,590 90,620 20,625", "0,630 40,630 40,710 0,710", "470,20 505,20 505,65 470,65", "445,55 462,55 462,75 445,75", "385,175 405,175 405,180 385,180", "270,215 290,215 290,225 270,225"]} />
      <Polys f="#b2b2b2" p={["185,150 240,150 235,185 190,185", "190,210 230,210 230,235 190,235", "50,305 100,310 100,320 50,318", "75,375 100,375 100,395 75,395"]} />
      <Bits c="#444" w={2} d={ticks(8, 30, 125, 180, 34, 26)} />
      <Polys f="#060606" p={["15,505 92,510 92,585 20,585"]} />
      <polygon points="245,85 330,85 330,95 245,95" fill="#1d1d1d" />
      <Road d="330,88 715,76" w={14} />
      <Road d="245,118 715,106" w={14} />
      <Road d="245,100 715,92" w={7} c="#d4d4d4" />
      <Road d="515,0 590,330 660,705" w={17} />
      <Road d="140,0 160,340" w={13} />
      <Road d="160,338 250,335 420,330 580,330" w={7} />
      <Dashes p={["0,100 240,100", "0,185 160,180", "0,455 280,440 600,420 715,410", "90,615 280,600 620,570", "625,370 715,390", "625,370 630,450 715,480"]} />
      <Bits c="#eee" w={2} d="M385,0L395,70H470L475,90M505,65L515,72" />
      <GrayDash p={["220,0 245,120 280,440 285,705", "0,225 90,215", "0,40 130,35", "20,290 130,285"]} />
      <Bits c="#555" w={3} d="M410,18H470M450,135H472M452,145H470M455,155H465M190,502L205,498M500,505L515,498M500,197L512,187M235,373H250" />
    </Z>
  </MapCanvas>
);

const LB = ({ w, ml, on, off, icon, text, chev = true, sub }: { w: number; ml?: number; on?: boolean; off?: boolean; icon: React.ReactNode; text: React.ReactNode; chev?: boolean; sub?: React.ReactNode }) => (
  <Large $w={w} $ml={ml} $on={on} $off={off}>
    <LargeIcon>{icon}</LargeIcon>
    <LargeText>{text}</LargeText>
    <LargeSub>{sub ?? (chev ? <ChevD c={on ? "#3a6f9c" : "#888"} /> : null)}</LargeSub>
  </Large>
);
const Foot = ({ t, launch = true }: { t: string; launch?: boolean }) => (
  <GroupFoot>
    <span />
    <span>{t}</span>
    <span>{launch ? <Launcher /> : null}</span>
  </GroupFoot>
);

export default function App() {
  return (
    <Page>
      <Global />
      <TitleBar>
        <Qat>
          <QatSlot $w={25}><NewProj /></QatSlot>
          <QatSlot $w={25}><OpenProj /></QatSlot>
          <QatSlot $w={23}><SaveProj /></QatSlot>
          <QatSlot $w={19}><Undo /></QatSlot>
          <QatSlot $w={13}><ChevD c="#666" w={6} /></QatSlot>
          <QatSlot $w={20}><Redo /></QatSlot>
          <QatSlot $w={19}><ChevD c="#666" w={6} /></QatSlot>
          <QatSlot $w={10}><Customize /></QatSlot>
        </Qat>
        <DocTitle><Lat>Untitled</Lat></DocTitle>
        <TopSearch>
          <Mag c="#777" />
          <span>命令搜索 (<Lat>Alt-Q</Lat>)</span>
        </TopSearch>
        <Account>未登录</Account>
        <Avatar><User /></Avatar>
        <WinSlot $ml={14}><Bell /></WinSlot>
        <WinSlot $ml={26}><Question>?</Question></WinSlot>
        <WinSlot $ml={30}><WinMin /></WinSlot>
        <WinSlot $ml={28}><WinMax /></WinSlot>
        <WinSlot $ml={27}><Close s={11} c="#555" /></WinSlot>
      </TitleBar>
      <TabBar>
        {["工程", "地图", "插入", "分析", "视图", "编辑", "影像", "共享"].map((t, i) => (
          <TabItem key={t} $on={i === 1} $ml={i === 1 ? 3 : 0}><span>{t}</span></TabItem>
        ))}
        <Context>
          <TabItem $w={64}><span>栅格图层</span></TabItem>
          <TabItem $w={50}><span>数据</span></TabItem>
        </Context>
      </TabBar>
      <Ribbon>
        <Group $w={107}>
          <GroupBody>
            <LB w={26} ml={4} off icon={<Paste />} text="粘贴" />
            <SmallCol $ml={7}>
              <Small $off><Scissors />剪切</Small>
              <Small $off><Copy />复制</Small>
              <Small $off><CopyPath />复制路径</Small>
            </SmallCol>
          </GroupBody>
          <Foot t="剪贴板" launch={false} />
        </Group>
        <Group $w={150}>
          <GroupBody>
            <LB w={33} ml={6} on icon={<Navigator />} text="浏览" />
            <SmallCol $ml={2} $w={38}>
              <SmallRow $gap={5}><Globe /><ZoomLayer /></SmallRow>
              <SmallRow $gap={5}><Arrows4 /><Arrows4 flip /></SmallRow>
              <SmallRow $gap={5}><ArrowL /><ArrowR /></SmallRow>
            </SmallCol>
            <LB w={29} ml={1} icon={<Book />} text="书签" />
            <LB w={27} ml={4} icon={<GoTo />} text="转到" sub={<Lat>XY</Lat>} />
          </GroupBody>
          <Foot t="导航" />
        </Group>
        <Group $w={182}>
          <GroupBody>
            <LB w={28} ml={10} icon={<Basemap />} text="底图" />
            <LB w={43} ml={5} icon={<AddData />} text="添加数据" />
            <SmallCol $ml={6}>
              <Small><AddGraphic />添加图形图层</Small>
            </SmallCol>
          </GroupBody>
          <Foot t="图层" />
        </Group>
        <Group $w={181}>
          <GroupBody>
            <LB w={28} ml={8} icon={<SelectIc />} text="选择" />
            <LB w={51} ml={6} icon={<SelAttr />} text="按属性选择" />
            <LB w={51} ml={7} icon={<SelLoc />} text="按位置选择" />
            <SmallCol $ml={4} $w={18}>
              <SmallRow><TableIc /></SmallRow>
              <SmallRow><SelFade /></SmallRow>
              <SmallRow><SelFade z /></SmallRow>
            </SmallCol>
          </GroupBody>
          <Foot t="选择" />
        </Group>
        <Group $w={194}>
          <GroupBody>
            <LB w={28} ml={8} icon={<Ruler />} text="测量" />
            <LB w={28} ml={5} icon={<Binoc />} text="定位" />
            <LB w={64} ml={5} off icon={<Info />} text={<Lat>Infographics</Lat>} />
            <LB w={46} ml={3} icon={<CoordIc />} text="坐标转换" chev={false} />
          </GroupBody>
          <Foot t="查询" launch={false} />
        </Group>
        <Group $w={136}>
          <GroupBody>
            <SmallCol $ml={9} $w={87}>
              <SmallRow $gap={7} $start>
                <Small $gap={1}><Pause />暂停</Small>
                <Small $gap={1}><Lock />锁定</Small>
              </SmallRow>
              <Small><Cancel /></Small>
              <Small><PenIc /><ChevD c="#666" /></Small>
            </SmallCol>
            <LB w={32} icon={<Convert />} text="转换" />
          </GroupBody>
          <Foot t="标注" />
        </Group>
        <Group $w={79}>
          <GroupBody>
            <LB w={44} ml={8} off icon={<Download />} text="下载地图" />
            <SmallCol $ml={3} $w={18}>
              <SmallRow><TileFade /></SmallRow>
              <SmallRow><TileFade /></SmallRow>
            </SmallCol>
          </GroupBody>
          <Foot t="离线" />
        </Group>
        <Collapse>
          <Glyph width={9} height={6} viewBox="0 0 9 6">
            <path d="M.5 5L4.5 1L8.5 5" fill="none" stroke="#444" strokeWidth="1.2" />
          </Glyph>
        </Collapse>
      </Ribbon>
      <Main>
        <LeftPanel>
          <PanelHead>
            <HeadTitle>内容</HeadTitle>
            <HeadBtns><ChevD c="#666" /><Pin /><Close /></HeadBtns>
          </PanelHead>
          <SearchRow>
            <Spacer $w={3} />
            <Funnel />
            <SearchBox $w={214} $ml={7}>
              <span>搜索</span>
              <SearchEnd><Mag /><ChevD c="#777" /></SearchEnd>
            </SearchBox>
          </SearchRow>
          <CatRow>
            <DrawOrder />
            <Cylinder />
            <S w={18} h={18}><Tile s={18} /></S>
            <Pencil />
            <GridPlus />
            <Label2 />
            <Flask />
            <S w={15} h={3}><path d="M0 1.5h3M6 1.5h3M12 1.5h3" stroke="#444" strokeWidth="2.4" /></S>
          </CatRow>
          <CatLine />
          <Heading>绘制顺序</Heading>
          <MapRow>
            <TriD />
            <MapIc />
            地图
          </MapRow>
          <LayerRow>
            <LayerArrow><TriD /></LayerArrow>
            <Check />
            <span>电子图<Lat>.tif_Band_2</Lat></span>
          </LayerRow>
          <LegendTitle>值</LegendTitle>
          <Legend>
            <Ramp />
            <RampLabels><span>254</span><span>55</span></RampLabels>
          </Legend>
        </LeftPanel>
        <Center>
          <DocTabs>
            <DocTab>
              <MapIc />
              <DocTabLabel>地图</DocTabLabel>
              <Close s={10} c="#666" />
            </DocTab>
            <DocChevron><ChevD c="#666" w={9} /></DocChevron>
          </DocTabs>
          <MapView><Raster /></MapView>
          <StatusBar>
            <ScaleBox><Lat $s={8.5}>1:19,523</Lat><ChevD c="#555" w={6} /></ScaleBox>
            <Sep $ml={4} />
            <StatItem $ml={7}><StGrid /></StatItem>
            <StatItem $ml={6}><StGrid2 /></StatItem>
            <StatItem $ml={6}><StNet /></StatItem>
            <StatItem $ml={6}><StSnap /></StatItem>
            <StatItem $ml={5}><StNorth /></StatItem>
            <Sep $ml={7} />
            <CoordText><Lat $s={8.8}>116.8548544° </Lat>东<Lat $s={8.8}> 39.1310520° </Lat>北</CoordText>
            <StatItem $ml={0}><ChevD c="#555" w={9} /></StatItem>
            <Sep $ml={24} />
            <StatItem $ml={7}><ZoomLayer /></StatItem>
            <SelCount>所选要素<Lat $s={9.5}>: 0</Lat></SelCount>
            <Sep $ml={7} />
            <StatItem $ml={7}><StPause /></StatItem>
            <Sep $ml={6} />
            <StatItem $ml={6}><StRefresh /></StatItem>
          </StatusBar>
        </Center>
        <Right>
          <Geo>
            <PanelHead $blue>
              <HeadTitle>地理处理</HeadTitle>
              <HeadBtns><ChevD c="#666" /><Pin /><Close /></HeadBtns>
            </PanelHead>
            <SearchRow>
              <Spacer $w={6} />
              <BackC />
              <SearchBox $w={192} $ml={6}>
                <span>查找工具</span>
                <SearchEnd><Mag /><ChevD c="#777" /></SearchEnd>
              </SearchBox>
              <Spacer $w={7} />
              <PlusC />
            </SearchRow>
            <GeoTabs>
              <GeoTab>收藏夹</GeoTab>
              <GeoTab $on>工具箱</GeoTab>
            </GeoTabs>
            <TreeArea>
              <Tree>
                <TreeList>
                  <Row1 level={0}><Lat>Defense </Lat>工具</Row1>
                  <Row1 level={0}><Lat>GeoAI </Lat>工具</Row1>
                  <Row1 level={0}><Lat>GeoAnalytics Desktop </Lat>工具</Row1>
                  <Row1 level={0}><Lat>Indoors </Lat>工具</Row1>
                  <Row1 level={0}><Lat>Maritime Tools</Lat></Row1>
                  <Row1 level={0}><Lat>Network Analyst </Lat>工具</Row1>
                  <Row1 level={0} open><Lat>Spatial Analyst </Lat>工具</Row1>
                  <Row1 level={1} set><Lat>Groundwater</Lat></Row1>
                  <Row1 level={1} set>表面分析</Row1>
                  <Row1 level={1} set>插值分析</Row1>
                  <Row1 level={1} set open>地图代数</Row1>
                  <SelectedRow><Hammer />栅格计算器</SelectedRow>
                  <Row1 level={1} set>叠加分析</Row1>
                  <Row1 level={1} set>多维分析</Row1>
                  <Row1 level={1} set>多元分析</Row1>
                  <Row1 level={1} set>局部分析</Row1>
                  <Row1 level={1} set>距离</Row1>
                  <Row1 level={1} set>邻域分析</Row1>
                  <Row1 level={1} set>密度分析</Row1>
                  <Row1 level={1} set>区域分析</Row1>
                  <Row1 level={1} set>数学分析</Row1>
                </TreeList>
              </Tree>
              <Scroll>
                <Glyph width={7} height={4} viewBox="0 0 7 4"><path d="M.5 3.5L3.5 .5L6.5 3.5" fill="none" stroke="#aaa" /></Glyph>
                <Thumb />
                <ScrollEnd><ChevD c="#aaa" /></ScrollEnd>
              </Scroll>
            </TreeArea>
          </Geo>
          <BottomTabs>
            <BottomTab $w={24} $ml={3}>目录</BottomTab>
            <BottomTab $w={47} $ml={4} $on>地理⋯</BottomTab>
            <BottomTab $w={32} $ml={5}>符号⋯</BottomTab>
            <BottomTab $w={22} $ml={15}>导出</BottomTab>
            <BottomTab $w={32} $ml={10}>导出⋯</BottomTab>
            <BottomTab $w={32} $ml={15}>打印⋯</BottomTab>
          </BottomTabs>
        </Right>
      </Main>
    </Page>
  );
}
